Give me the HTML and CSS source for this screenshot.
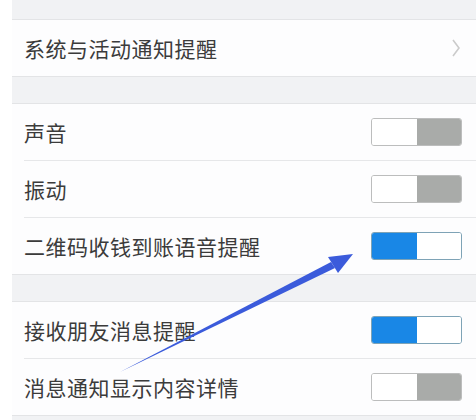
FILE: index.html
```html
<!DOCTYPE html>
<html lang="zh">
<head>
<meta charset="utf-8">
<link rel="stylesheet" href="styles.css">
</head>
<body>
<div class="screen">
  <div class="gap gap-top"></div>
  <div class="group">
    <div class="row">
      <span class="label">系统与活动通知提醒</span>
      <svg class="chevron" width="8" height="18" viewBox="0 0 8 18"><path d="M1 1 L7 9 L1 17" fill="none" stroke="#cbcbcb" stroke-width="1.6"/></svg>
    </div>
  </div>
  <div class="gap"></div>
  <div class="group">
    <div class="row"><span class="label">声音</span><span class="toggle off"><span class="knob"></span><span class="rest"></span></span></div>
    <div class="row"><span class="label">振动</span><span class="toggle off"><span class="knob"></span><span class="rest"></span></span></div>
    <div class="row"><span class="label">二维码收钱到账语音提醒</span><span class="toggle on"><span class="rest"></span><span class="knob"></span></span></div>
  </div>
  <div class="gap"></div>
  <div class="group">
    <div class="row"><span class="label">接收朋友消息提醒</span><span class="toggle on"><span class="rest"></span><span class="knob"></span></span></div>
    <div class="row"><span class="label">消息通知显示内容详情</span><span class="toggle off"><span class="knob"></span><span class="rest"></span></span></div>
  </div>
  <div class="fill"></div>
</div>
<svg class="arrow" width="476" height="420" viewBox="0 0 476 420">
  <path d="M120 372 L331 262 L335 268 Z" fill="#3b5bdb"/>
  <path d="M353 254 L328 257 L338 273 Z" fill="#3b5bdb"/>
</svg>
</body>
</html>
```
FILE: styles.css
```css
html, body {
  margin: 0;
  padding: 0;
  background: #ffffff;
}
body {
  width: 476px;
  height: 420px;
  overflow: hidden;
  position: relative;
  font-family: "Noto Sans CJK SC", "Noto Sans", sans-serif;
}
.screen {
  margin-left: 12px;
  background: #f1f2f4;
  height: 420px;
  display: flex;
  flex-direction: column;
  overflow: hidden;
}
.gap {
  height: 26px;
  flex: none;
}
.gap-top {
  height: 19px;
}
.fill {
  flex: 1;
}
.group {
  flex: none;
  background: #fdfdfe;
  border-top: 1px solid #e3e4e6;
  border-bottom: 1px solid #e3e4e6;
  padding-left: 12px;
}
.row {
  height: 56px;
  display: flex;
  align-items: center;
  justify-content: space-between;
  padding-right: 14px;
  border-top: 1px solid #e6e7e9;
}
.row:first-child {
  border-top: none;
}
.label {
  font-size: 21px;
  color: #3b3b3b;
  letter-spacing: 0.5px;
}
.chevron {
  margin-right: 2px;
}
.toggle {
  display: flex;
  width: 91px;
  height: 28px;
  border-radius: 3px;
  overflow: hidden;
  box-sizing: border-box;
}
.toggle.off {
  border: 1px solid #bcbdbd;
}
.toggle.off .knob {
  width: 45px;
  background: #ffffff;
}
.toggle.off .rest {
  flex: 1;
  background: #a9aba9;
}
.toggle.on {
  border: 1px solid #7ea3b6;
}
.toggle.on .rest {
  width: 45px;
  background: #1987e6;
}
.toggle.on .knob {
  flex: 1;
  background: #ffffff;
}
.arrow {
  position: absolute;
  left: 0;
  top: 0;
}
```
